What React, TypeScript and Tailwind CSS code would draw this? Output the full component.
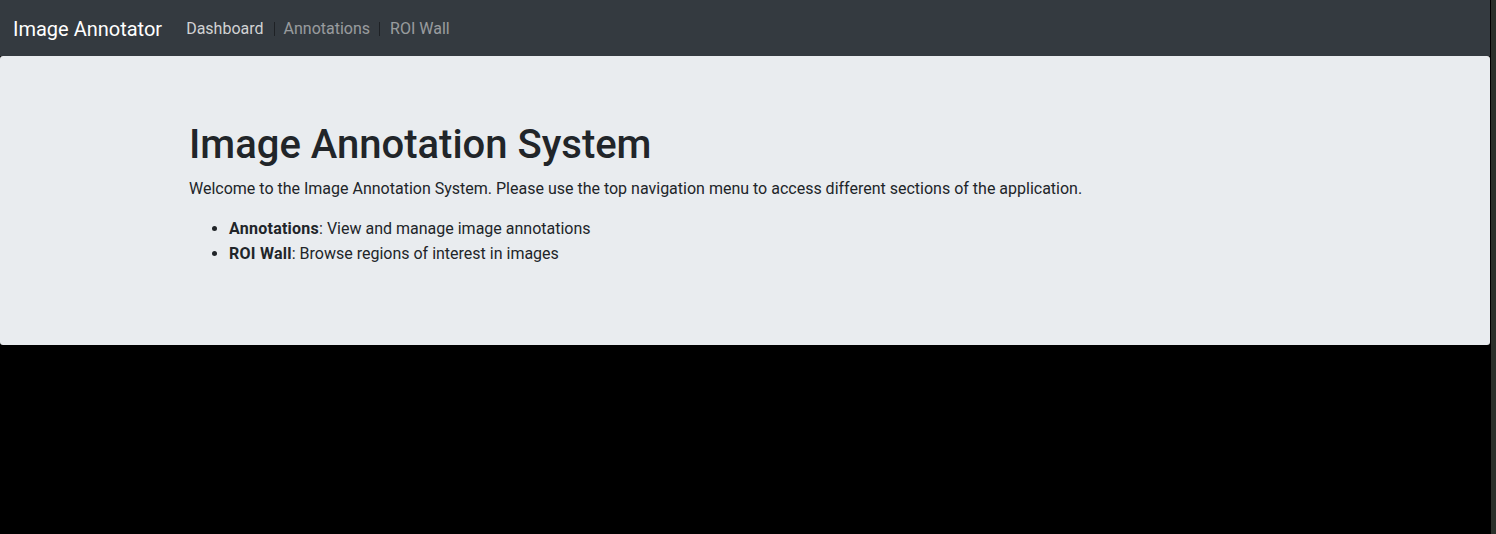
import React from "react";

export default function App() {
  return (
    <div className="flex min-h-[534px] w-full bg-black" style={{ fontFamily: "Roboto, 'Liberation Sans', sans-serif" }}>
      <div className="w-[1490px] shrink-0">
        <nav className="flex h-[56px] items-center bg-[#343a40] pl-[13px]">
          <span className="mr-4 pt-[1px] text-[20px] leading-[30px] text-white">Image Annotator</span>
          <div className="flex items-center pt-[1px] text-[16px] leading-[24px]">
            <span className="px-2 py-2 text-[rgba(255,255,255,0.78)]">Dashboard</span>
            <span className="ml-[2px] mr-[1px] mt-[13px] h-[14px] w-px self-start bg-[#1e2125]"></span>
            <span className="px-2 py-2 text-[rgba(255,255,255,0.5)]">Annotations</span>
            <span className="ml-[1px] mr-[2px] mt-[13px] h-[14px] w-px self-start bg-[#1e2125]"></span>
            <span className="px-2 py-2 text-[rgba(255,255,255,0.5)]">ROI Wall</span>
          </div>
        </nav>
        <div className="rounded-[3px] bg-[#e9ecef] pb-[63px] pt-[65px] text-[#212529]">
          <div className="mx-auto w-[1140px] pl-[14px] pr-[16px]">
            <h1 className="mb-2 text-[40px] font-medium leading-[48px]">Image Annotation System</h1>
            <p className="mb-[15px] text-[16px] leading-[24px]">
              Welcome to the Image Annotation System. Please use the top navigation menu to access different sections of the application.
            </p>
            <ul className="mb-4 list-disc pl-10 text-[16px] leading-[25px]">
              <li><strong className="font-bold tracking-[0.25px]">Annotations</strong>: View and manage image annotations</li>
              <li><strong className="font-bold tracking-[0.25px]">ROI Wall</strong>: Browse regions of interest in images</li>
            </ul>
          </div>
        </div>
      </div>
      <div className="w-[6px] shrink-0 border-l border-black bg-[#2b312b]"></div>
    </div>
  );
}
